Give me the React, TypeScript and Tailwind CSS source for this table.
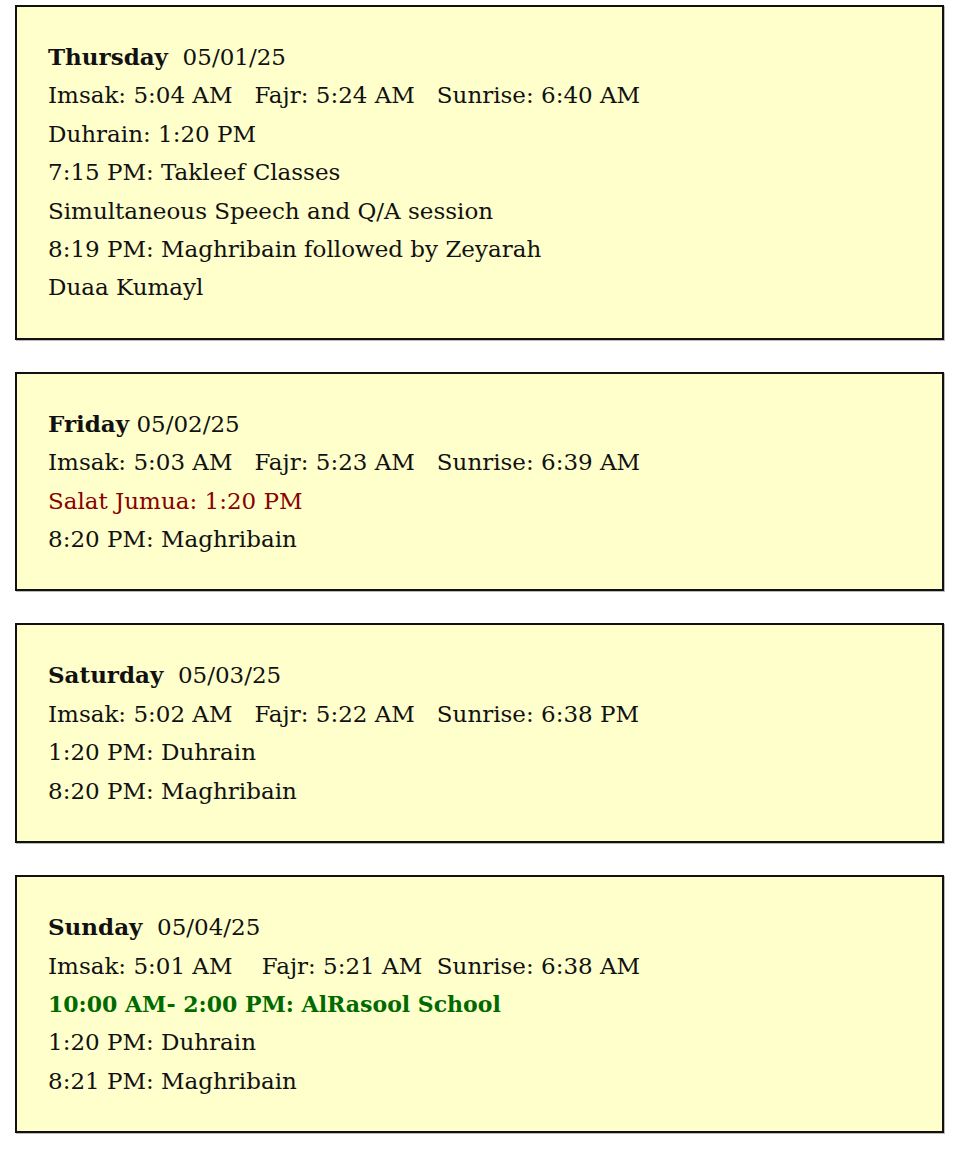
const days = [
  {
    day: 'Thursday',
    sep: '\u00a0\u00a0',
    date: '05/01/25',
    lines: [
      { text: 'Imsak: 5:04 AM\u00a0\u00a0\u00a0Fajr: 5:24 AM\u00a0\u00a0\u00a0Sunrise: 6:40 AM' },
      { text: 'Duhrain: 1:20 PM' },
      { text: '7:15 PM: Takleef Classes' },
      { text: 'Simultaneous Speech and Q/A session' },
      { text: '8:19 PM: Maghribain followed by Zeyarah' },
      { text: 'Duaa Kumayl' },
    ],
  },
  {
    day: 'Friday',
    sep: ' ',
    date: '05/02/25',
    lines: [
      { text: 'Imsak: 5:03 AM\u00a0\u00a0\u00a0Fajr: 5:23 AM\u00a0\u00a0\u00a0Sunrise: 6:39 AM' },
      { text: 'Salat Jumua: 1:20 PM', tone: 'red' },
      { text: '8:20 PM: Maghribain' },
    ],
  },
  {
    day: 'Saturday',
    sep: '\u00a0\u00a0',
    date: '05/03/25',
    lines: [
      { text: 'Imsak: 5:02 AM\u00a0\u00a0\u00a0Fajr: 5:22 AM\u00a0\u00a0\u00a0Sunrise: 6:38 PM' },
      { text: '1:20 PM: Duhrain' },
      { text: '8:20 PM: Maghribain' },
    ],
  },
  {
    day: 'Sunday',
    sep: '\u00a0\u00a0',
    date: '05/04/25',
    lines: [
      { text: 'Imsak: 5:01 AM\u00a0\u00a0\u00a0\u00a0Fajr: 5:21 AM\u00a0\u00a0Sunrise: 6:38 AM' },
      { text: '10:00 AM- 2:00 PM: AlRasool School', tone: 'green' },
      { text: '1:20 PM: Duhrain' },
      { text: '8:21 PM: Maghribain' },
    ],
  },
];

const toneClass = (tone?: string) => {
  switch (tone) {
    case 'red':
      return 'text-[#8b0000]';
    case 'green':
      return 'text-[#006a00] font-bold text-[22px]';
    default:
      return 'text-[#111]';
  }
};

export default function App() {
  return (
    <div
      className="bg-white min-h-[1155px] pt-[5px] pl-[15px] pr-[20px] flex flex-col gap-[32px]"
      style={{ fontFamily: '"DejaVu Serif", "Liberation Serif", serif' }}
    >
      {days.map((d) => (
        <div
          key={d.day}
          className="bg-[#ffffcc] border-2 border-[#111] shadow-[1px_1px_0_#bbb] px-[31px] py-[31px] text-[23px] leading-[38.4px] text-[#111]"
        >
          <div className="whitespace-pre">
            <span className="font-bold">{d.day}</span>
            {d.sep}
            {d.date}
          </div>
          {d.lines.map((l, i) => (
            <div key={i} className={`whitespace-pre ${toneClass(l.tone)}`}>
              {l.text}
            </div>
          ))}
        </div>
      ))}
    </div>
  );
}
